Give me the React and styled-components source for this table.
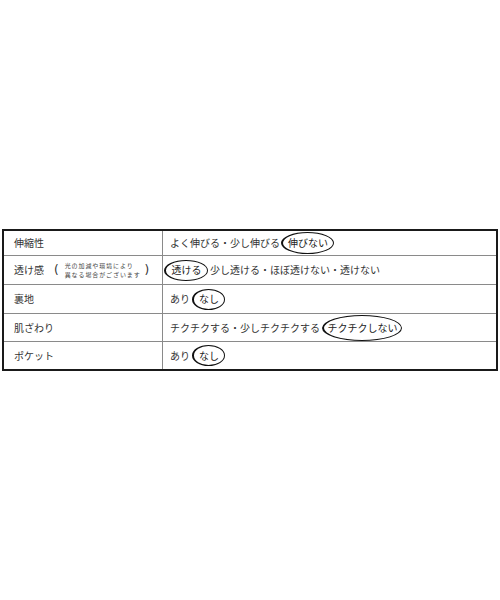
import React from 'react'
import styled, {createGlobalStyle} from 'styled-components'

const Global = createGlobalStyle`
  body {
    margin: 0;
    background: #fff;
    font-family: "Noto Sans CJK JP", "Noto Sans", sans-serif;
    color: #333;
  }
`

const Page = styled.div`
  padding: 229px 2px 0 2px;
`

const Table = styled.div`
  display: grid;
  grid-template-columns: 159px 1fr;
  width: 496px;
  box-sizing: border-box;
  border: 2px solid #1a1a1a;
`

const Cell = styled.div`
  height: ${p => p.h}px;
  display: flex;
  align-items: center;
  box-sizing: border-box;
  font-size: 10px;
  line-height: 1;
  white-space: nowrap;
  padding-left: ${p => (p.label ? 10 : 7)}px;
  border-right: ${p => (p.label ? '1px solid #8a8a8a' : 'none')};
  border-bottom: ${p => (p.last ? 'none' : '1px solid #8a8a8a')};
`

const Note = styled.span`
  display: inline-flex;
  align-items: center;
  margin-left: 10px;
  font-size: 12px;
  color: #333;
`

const Paren = styled.span`
  font-family: "DejaVu Sans", sans-serif;
  font-size: 12px;
`

const NoteText = styled.span`
  display: inline-flex;
  flex-direction: column;
  font-size: 6px;
  line-height: 9px;
  letter-spacing: 0.9px;
  margin: 0 4px 0 6px;
  color: #444;
`

const Circled = styled.span`
  display: inline-flex;
  align-items: center;
  justify-content: center;
  width: ${p => p.w}px;
  height: ${p => p.hh}px;
  margin: -6px ${p => p.mr || 0}px -6px ${p => p.ml || 0}px;
  box-sizing: border-box;
  border: 1.5px solid #111;
  border-left-width: 2.5px;
  border-radius: 50%;
  color: #222;
`

const rows = [
  {
    label: '伸縮性',
    h: 25,
    value: (
      <>
        よく伸びる・少し伸びる
        <Circled w={53} hh={22} ml={1}>伸びない</Circled>
      </>
    )
  },
  {
    label: (
      <>
        透け感
        <Note>
          <Paren>(</Paren>
          <NoteText>
            <span>光の加減や環境により</span>
            <span>異なる場合がございます</span>
          </NoteText>
          <Paren>)</Paren>
        </Note>
      </>
    ),
    h: 29,
    value: (
      <>
        <Circled w={44} hh={21} ml={-6} mr={2}>透ける</Circled>
        少し透ける・ほぼ透けない・透けない
      </>
    )
  },
  {
    label: '裏地',
    h: 29,
    value: (
      <>
        あり
        <Circled w={33} hh={21} ml={2}>なし</Circled>
      </>
    )
  },
  {
    label: '肌ざわり',
    h: 28,
    value: (
      <>
        チクチクする・少しチクチクする
        <Circled w={80} hh={26} ml={2}>チクチクしない</Circled>
      </>
    )
  },
  {
    label: 'ポケット',
    h: 27,
    value: (
      <>
        あり
        <Circled w={33} hh={21} ml={2}>なし</Circled>
      </>
    )
  }
]

export default function App() {
  return (
    <Page>
      <Global />
      <Table>
        {rows.map((r, i) => (
          <React.Fragment key={i}>
            <Cell label h={r.h} last={i === rows.length - 1}>
              {r.label}
            </Cell>
            <Cell h={r.h} last={i === rows.length - 1}>
              {r.value}
            </Cell>
          </React.Fragment>
        ))}
      </Table>
    </Page>
  )
}
